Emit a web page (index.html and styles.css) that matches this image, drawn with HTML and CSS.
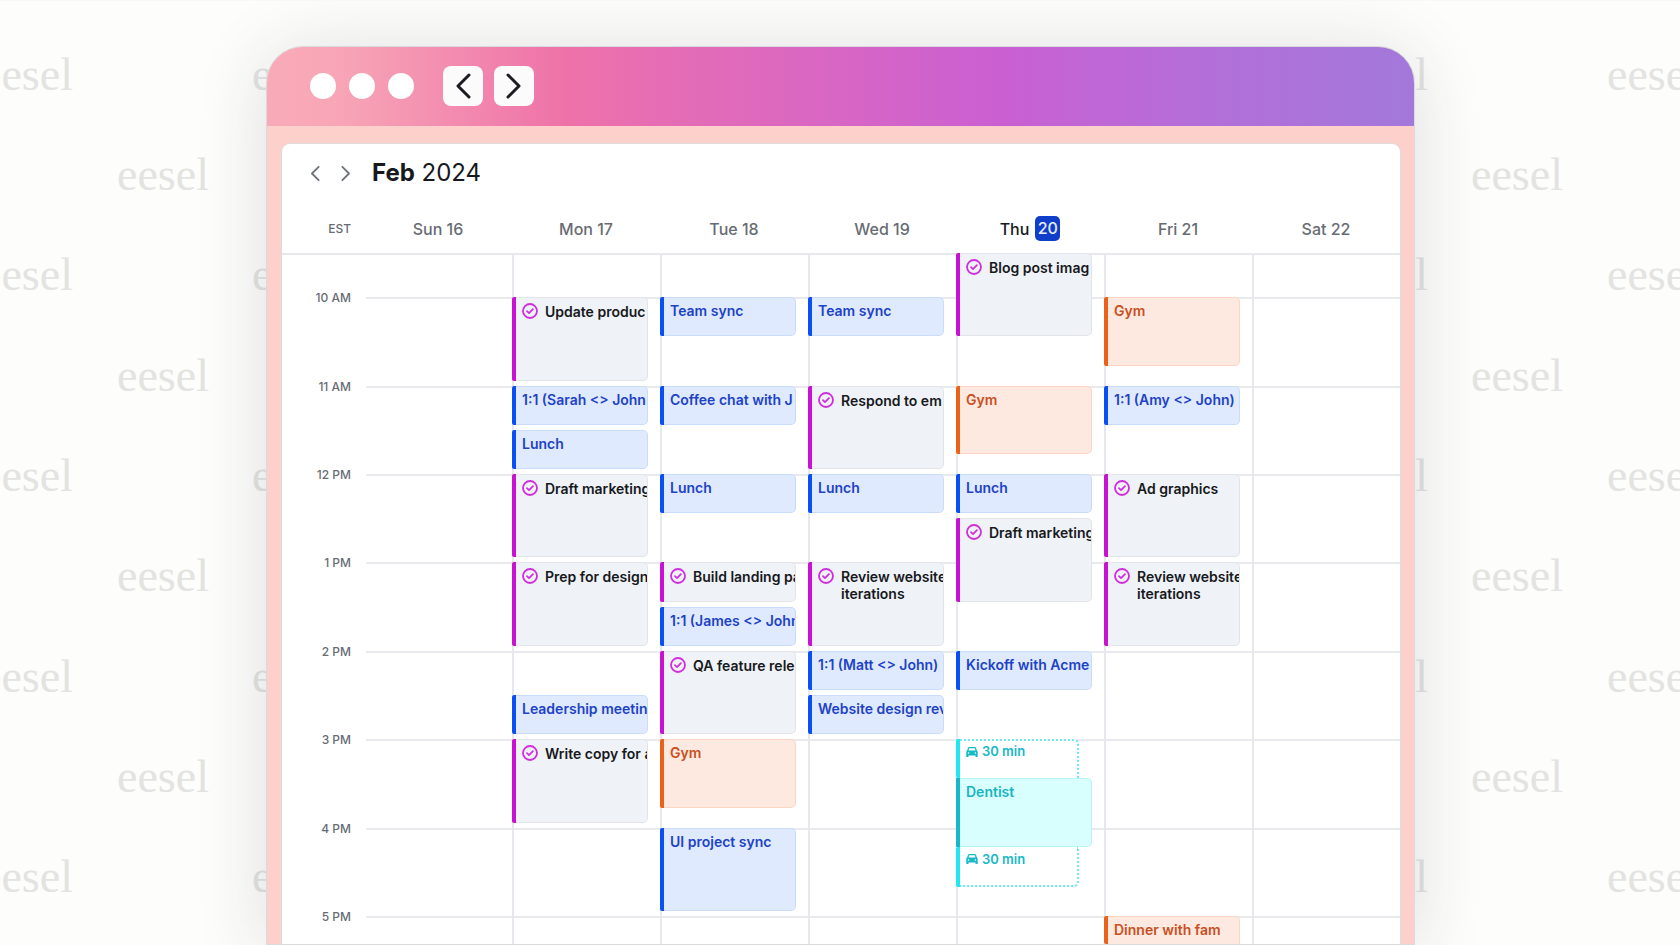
FILE: index.html
```html
<!DOCTYPE html>
<html lang="en">
<head>
  <meta charset="UTF-8">
  <title>Calendar - Feb 2024</title>
  <meta name="viewport" content="width=device-width, initial-scale=1.0">
  <link rel="stylesheet" href="styles.css">
</head>
<body>
  <svg class="sprite" xmlns="http://www.w3.org/2000/svg">
    <symbol id="check" viewBox="0 0 16 16">
      <circle cx="8" cy="8" r="7" fill="none" stroke="currentColor" stroke-width="1.8"/>
      <path d="M5 8.200 7 10.100 10.900 6.200" fill="none" stroke="currentColor" stroke-width="1.8" stroke-linecap="round" stroke-linejoin="round"/>
    </symbol>
    <symbol id="car" viewBox="0 0 12 12">
      <path fill="currentColor" fill-rule="evenodd" d="M3.2 1h5.6c.6 0 1 .3 1.2.8l.9 2.7c.5.3.8.8.8 1.4v4.6c0 .4-.3.6-.6.6h-.9c-.4 0-.7-.3-.7-.6v-.9h-7v.9c0 .4-.3.6-.7.6H.9c-.3 0-.6-.2-.6-.6V5.9c0-.6.3-1.1.8-1.4L2 1.8C2.200 1.300 2.600 1 3.200 1zM3.200 2.300 2.500 4.400h7L8.800 2.300zM2.600 6.200a.8.8 0 1 0 0 1.600.8.8 0 0 0 0-1.600zm6.800 0a.8.8 0 1 0 0 1.600.8.8 0 0 0 0-1.600z"/>
    </symbol>
    <symbol id="left" viewBox="0 0 16 28">
      <path d="M14 3 3 14l11 11" fill="none" stroke="currentColor" stroke-width="3" stroke-linecap="round" stroke-linejoin="round"/>
    </symbol>
    <symbol id="right" viewBox="0 0 16 28">
      <path d="M2 3l11 11L2 25" fill="none" stroke="currentColor" stroke-width="3" stroke-linecap="round" stroke-linejoin="round"/>
    </symbol>
  </svg>

  <div class="page">
    <div class="backdrop" aria-hidden="true">
      <div class="row wide"><span>eesel</span><span>eesel</span><i></i><span>eesel</span><span>eesel</span></div>
      <div class="row"><span>eesel</span><i></i><span>eesel</span></div>
      <div class="row wide"><span>eesel</span><span>eesel</span><i></i><span>eesel</span><span>eesel</span></div>
      <div class="row"><span>eesel</span><i></i><span>eesel</span></div>
      <div class="row wide"><span>eesel</span><span>eesel</span><i></i><span>eesel</span><span>eesel</span></div>
      <div class="row"><span>eesel</span><i></i><span>eesel</span></div>
      <div class="row wide"><span>eesel</span><span>eesel</span><i></i><span>eesel</span><span>eesel</span></div>
      <div class="row"><span>eesel</span><i></i><span>eesel</span></div>
      <div class="row wide"><span>eesel</span><span>eesel</span><i></i><span>eesel</span><span>eesel</span></div>
    </div>

    <div class="window">
      <div class="titlebar">
        <div class="dots"><span></span><span></span><span></span></div>
        <div class="nav">
          <button type="button" aria-label="Back"><svg><use href="#left"/></svg></button>
          <button type="button" aria-label="Forward"><svg><use href="#right"/></svg></button>
        </div>
      </div>

      <main class="pane">
        <header class="month">
          <button type="button" aria-label="Previous week"><svg><use href="#left"/></svg></button>
          <button type="button" aria-label="Next week"><svg><use href="#right"/></svg></button>
          <h1><b>Feb</b> 2024</h1>
        </header>

        <div class="days">
          <div class="zone">EST</div>
          <div>Sun 16</div>
          <div>Mon 17</div>
          <div>Tue 18</div>
          <div>Wed 19</div>
          <div class="today">Thu <span>20</span></div>
          <div>Fri 21</div>
          <div>Sat 22</div>
        </div>

        <!-- one row = 10 minutes, first row is 9:30 -->
        <div class="week">
          <div class="hour" style="--start: 4"><span>10 AM</span></div>
          <div class="hour" style="--start: 10"><span>11 AM</span></div>
          <div class="hour" style="--start: 16"><span>12 PM</span></div>
          <div class="hour" style="--start: 22"><span>1 PM</span></div>
          <div class="hour" style="--start: 28"><span>2 PM</span></div>
          <div class="hour" style="--start: 34"><span>3 PM</span></div>
          <div class="hour" style="--start: 40"><span>4 PM</span></div>
          <div class="hour" style="--start: 46"><span>5 PM</span></div>

          <div class="day sun"></div>

          <div class="day mon">
            <div class="event task" style="--start: 4; --len: 6"><div class="card"><svg><use href="#check"/></svg><p>Update produc</p></div></div>
            <div class="event blue" style="--start: 10; --len: 3"><div class="card"><p>1:1 (Sarah &lt;&gt; John</p></div></div>
            <div class="event blue" style="--start: 13; --len: 3"><div class="card"><p>Lunch</p></div></div>
            <div class="event task" style="--start: 16; --len: 6"><div class="card"><svg><use href="#check"/></svg><p>Draft marketing</p></div></div>
            <div class="event task" style="--start: 22; --len: 6"><div class="card"><svg><use href="#check"/></svg><p>Prep for design</p></div></div>
            <div class="event blue" style="--start: 31; --len: 3"><div class="card"><p>Leadership meetin</p></div></div>
            <div class="event task" style="--start: 34; --len: 6"><div class="card"><svg><use href="#check"/></svg><p>Write copy for a</p></div></div>
          </div>

          <div class="day tue">
            <div class="event blue" style="--start: 4; --len: 3"><div class="card"><p>Team sync</p></div></div>
            <div class="event blue" style="--start: 10; --len: 3"><div class="card"><p>Coffee chat with J</p></div></div>
            <div class="event blue" style="--start: 16; --len: 3"><div class="card"><p>Lunch</p></div></div>
            <div class="event task" style="--start: 22; --len: 3"><div class="card"><svg><use href="#check"/></svg><p>Build landing pa</p></div></div>
            <div class="event blue" style="--start: 25; --len: 3"><div class="card"><p>1:1 (James &lt;&gt; John</p></div></div>
            <div class="event task" style="--start: 28; --len: 6"><div class="card"><svg><use href="#check"/></svg><p>QA feature rele</p></div></div>
            <div class="event orange" style="--start: 34; --len: 5"><div class="card"><p>Gym</p></div></div>
            <div class="event blue" style="--start: 40; --len: 6"><div class="card"><p>UI project sync</p></div></div>
          </div>

          <div class="day wed">
            <div class="event blue" style="--start: 4; --len: 3"><div class="card"><p>Team sync</p></div></div>
            <div class="event task" style="--start: 10; --len: 6"><div class="card"><svg><use href="#check"/></svg><p>Respond to em</p></div></div>
            <div class="event blue" style="--start: 16; --len: 3"><div class="card"><p>Lunch</p></div></div>
            <div class="event task" style="--start: 22; --len: 6"><div class="card"><svg><use href="#check"/></svg><p>Review website<br>iterations</p></div></div>
            <div class="event blue" style="--start: 28; --len: 3"><div class="card"><p>1:1 (Matt &lt;&gt; John)</p></div></div>
            <div class="event blue" style="--start: 31; --len: 3"><div class="card"><p>Website design rev</p></div></div>
          </div>

          <div class="day thu">
            <div class="event task" style="--start: 1; --len: 6"><div class="card"><svg><use href="#check"/></svg><p>Blog post imag</p></div></div>
            <div class="event orange" style="--start: 10; --len: 5"><div class="card"><p>Gym</p></div></div>
            <div class="event blue" style="--start: 16; --len: 3"><div class="card"><p>Lunch</p></div></div>
            <div class="event task" style="--start: 19; --len: 6"><div class="card"><svg><use href="#check"/></svg><p>Draft marketing</p></div></div>
            <div class="event blue" style="--start: 28; --len: 3"><div class="card"><p>Kickoff with Acme</p></div></div>
            <div class="trip" style="--start: 34; --len: 10">
              <div class="event travel before"><div class="card"><svg><use href="#car"/></svg><p>30 min</p></div></div>
              <div class="event teal"><div class="card"><p>Dentist</p></div></div>
              <div class="event travel after"><div class="card"><svg><use href="#car"/></svg><p>30 min</p></div></div>
            </div>
          </div>

          <div class="day fri">
            <div class="event orange" style="--start: 4; --len: 5"><div class="card"><p>Gym</p></div></div>
            <div class="event blue" style="--start: 10; --len: 3"><div class="card"><p>1:1 (Amy &lt;&gt; John)</p></div></div>
            <div class="event task" style="--start: 16; --len: 6"><div class="card"><svg><use href="#check"/></svg><p>Ad graphics</p></div></div>
            <div class="event task" style="--start: 22; --len: 6"><div class="card"><svg><use href="#check"/></svg><p>Review website<br>iterations</p></div></div>
            <div class="event orange cut" style="--start: 46; --len: 1"><div class="card"><p>Dinner with fam</p></div></div>
          </div>

          <div class="day sat"></div>
        </div>
      </main>
    </div>
  </div>
</body>
</html>
```
FILE: styles.css
```css
* {
  box-sizing: border-box;
}

body {
  margin: 0;
  font-family: Inter, "Liberation Sans", sans-serif;
  color: #17191c;
}

h1, p {
  margin: 0;
}

button {
  border: none;
  padding: 0;
  cursor: pointer;
  display: flex;
  align-items: center;
  justify-content: center;
}

.sprite {
  display: none;
}

.page {
  position: relative;
  display: flex;
  height: 100vh;
  min-height: 700px;
  padding: 45px 265px 0 266px;
  background: #fdfdfb;
  border-top: 1px solid #f8f8f6;
  overflow: hidden;
}

/* repeating wordmark behind the window */
.backdrop {
  position: absolute;
  inset: 0;
  display: flex;
  flex-direction: column;
  padding: 23px 0 18px;
  font-family: "Liberation Serif", serif;
  font-size: 46px;
  color: #e3e3e1;
}

.row {
  flex: 1;
  display: flex;
  align-items: center;
  padding: 0 117px;
}

.row.wide {
  gap: 179px;
  padding: 0;
  margin: 0 -19px;
}

.row span {
  width: 92px;
  flex: none;
}

.row i {
  flex: 1;
}

.window {
  position: relative;
  flex: 1;
  min-width: 0;
  display: flex;
  flex-direction: column;
  background: #fed0cb;
  border: 1px solid #d9dadd;
  border-radius: 37px 37px 0 0;
  box-shadow: 0 6px 70px rgba(40, 44, 66, 0.15);
  overflow: hidden;
}

.titlebar {
  flex: none;
  display: flex;
  align-items: center;
  gap: 29px;
  height: 79px;
  padding: 0 43px 2px;
  background: linear-gradient(90deg, #f9aab8 0%, #f8a6b7 6%, #ee72a8 26%, #e66db4 34%, #ca5fd2 64%, #b36fd9 82%, #a378da 100%);
}

.dots {
  display: flex;
  gap: 13px;
}

.dots span {
  width: 26px;
  height: 26px;
  border-radius: 50%;
  background: #fff;
}

.nav {
  display: flex;
  gap: 11px;
}

.nav button {
  width: 40px;
  height: 40px;
  border-radius: 8px;
  background: #fcfbfb;
  color: #1b1d22;
}

.nav svg {
  width: 16px;
  height: 28px;
}

.pane {
  flex: 1;
  min-height: 0;
  display: flex;
  flex-direction: column;
  margin: 18px 14px 0 15px;
  background: #fff;
  border-radius: 8px 8px 0 0;
  box-shadow: 0 0 0 1px #dfdbdd;
}

.month {
  flex: none;
  display: flex;
  align-items: center;
  height: 58px;
  padding-left: 25px;
}

.month button {
  width: 16px;
  height: 24px;
  margin-right: 15px;
  background: none;
  color: #70757c;
}

.month svg {
  width: 10px;
  height: 17px;
}

.month h1 {
  margin-left: 3px;
  font-size: 24px;
  line-height: 32px;
  font-weight: 400;
}

.month h1 b {
  font-weight: 700;
}

.days,
.week {
  display: grid;
  grid-template-columns: 82px repeat(7, minmax(0, 1fr));
}

.days {
  flex: none;
  height: 51px;
  padding-top: 2px;
  align-items: center;
  text-align: center;
  font-size: 16px;
  font-weight: 500;
  color: #676c73;
}

.days .zone {
  padding-right: 13px;
  font-size: 12px;
  text-align: right;
}

.today {
  display: flex;
  align-items: center;
  justify-content: center;
  gap: 6px;
  color: #17191c;
}

.today span {
  width: 25px;
  line-height: 25px;
  border-radius: 5px;
  background: #0f3ecb;
  color: #e8eeff;
}

.week {
  flex: 1;
  min-height: 0;
  grid-template-rows: repeat(45, minmax(0, 1fr)) 28px;
  background: linear-gradient(#e7e8ec, #e7e8ec) top / 100% 2px no-repeat;
}

.hour {
  grid-column: 1 / -1;
  grid-row: var(--start) / span 1;
  display: flex;
  gap: 15px;
  height: 2px;
  align-items: center;
}

.hour span {
  width: 69px;
  font-size: 12px;
  line-height: 16px;
  font-weight: 500;
  text-align: right;
  color: #676c73;
}

.hour::after {
  content: '';
  flex: 1;
  height: 2px;
  background: #e9eaed;
}

.day {
  grid-row: 1 / -1;
  display: grid;
  grid-template-rows: subgrid;
  border-left: 2px solid #e7e8ed;
}

.sun { grid-column: 2; border-left: none; }
.mon { grid-column: 3; }
.tue { grid-column: 4; }
.wed { grid-column: 5; }
.thu { grid-column: 6; }
.fri { grid-column: 7; }
.sat { grid-column: 8; }

.event {
  grid-row: var(--start) / span var(--len);
  display: flex;
  min-width: 0;
  margin: 0 12px 5px -2px;
  font-size: 14px;
  line-height: 17px;
  font-weight: 600;
}

.event::before {
  content: '';
  flex: none;
  width: 4px;
  border-radius: 2px 0 0 2px;
  background: var(--bar);
}

.card {
  flex: 1;
  min-width: 0;
  display: flex;
  padding: 4px 0 0 6px;
  border: 1px solid var(--edge);
  border-left: none;
  border-radius: 0 5px 5px 0;
  background: var(--fill);
  color: var(--text);
  white-space: nowrap;
  overflow: hidden;
}

.card svg {
  flex: none;
}

.task {
  --bar: #c911d3;
  --edge: #e2e4ea;
  --fill: #eff2f7;
  --text: #17191c;
}

.task .card {
  gap: 7px;
  padding-top: 5px;
}

.task svg {
  width: 16px;
  height: 16px;
  color: #d02fdc;
}

.blue {
  --bar: #0a4ff3;
  --edge: #cbdbfa;
  --fill: #e0eafe;
  --text: #1d43c6;
}

.orange {
  --bar: #ea611a;
  --edge: #fcd6c3;
  --fill: #fee9e0;
  --text: #c84f20;
}

.teal {
  --bar: #18b8c8;
  --edge: #b6f5f7;
  --fill: #d9fefe;
  --text: #17b5c3;
}

.travel {
  --bar: #22e6ef;
  --edge: #6feaf0;
  --fill: #fff;
  --text: #17b9c6;
}

.cut {
  margin-bottom: 0;
}

.cut .card {
  border-bottom: none;
  border-radius: 0 5px 0 0;
}

/* appointment with travel time on both sides */
.trip {
  grid-row: var(--start) / span var(--len);
  display: flex;
  flex-direction: column;
  margin: 0 12px 0 -2px;
}

.trip .event {
  margin: 0;
}

.trip .teal {
  height: 69px;
}

.trip .teal::before {
  border-radius: 0;
}

.trip .travel {
  flex: 1;
  margin-right: 13px;
  font-size: 13px;
}

.travel .card {
  gap: 4px;
  padding-top: 2px;
  border: 2px dotted var(--edge);
  border-left: none;
}

.travel svg {
  width: 12px;
  height: 12px;
  margin-top: 3px;
}

.before .card {
  border-bottom: none;
  border-radius: 0 5px 0 0;
}

.after .card {
  padding-top: 4px;
  border-top: none;
  border-radius: 0 0 5px 0;
}

.after svg {
  margin-top: 2px;
}
```
